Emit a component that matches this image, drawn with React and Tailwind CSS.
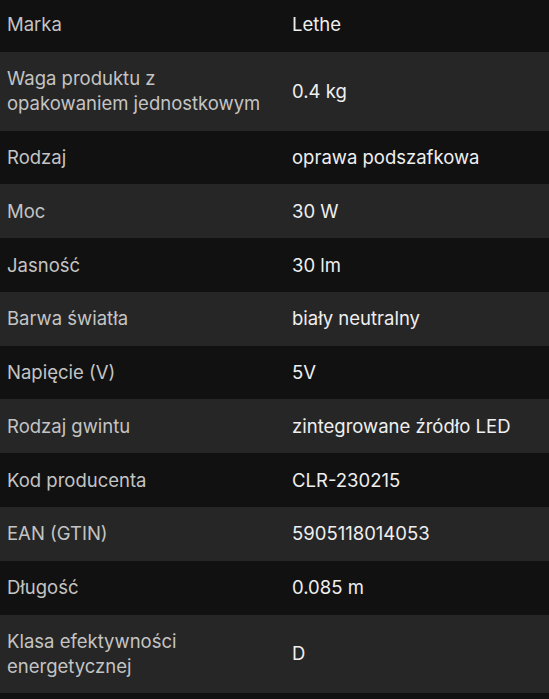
const rows = [
  ['Marka', 'Lethe'],
  ['Waga produktu z opakowaniem jednostkowym', '0.4 kg'],
  ['Rodzaj', 'oprawa podszafkowa'],
  ['Moc', '30 W'],
  ['Jasność', '30 lm'],
  ['Barwa światła', 'biały neutralny'],
  ['Napięcie (V)', '5V'],
  ['Rodzaj gwintu', 'zintegrowane źródło LED'],
  ['Kod producenta', 'CLR-230215'],
  ['EAN (GTIN)', '5905118014053'],
  ['Długość', '0.085 m'],
  ['Klasa efektywności energetycznej', 'D'],
  ['', ''],
];

export default function App() {
  return (
    <div
      className="w-[549px] h-[699px] overflow-hidden bg-[#111111]"
      style={{ fontFamily: 'Inter, "Noto Sans", sans-serif' }}
    >
      <div className="-mt-[2px]">
        {rows.map(([label, value], i) => (
          <div
            key={i}
            className={`grid grid-cols-[285px_1fr] items-center px-[7px] py-[14.4px] text-[18.5px] leading-[25px] ${
              i % 2 === 1 ? 'bg-[#262626]' : 'bg-[#111111]'
            }`}
          >
            <div className="text-[#c4c4c4] pr-6">{label}</div>
            <div className="text-[#efefef]">{value}</div>
          </div>
        ))}
      </div>
    </div>
  );
}
